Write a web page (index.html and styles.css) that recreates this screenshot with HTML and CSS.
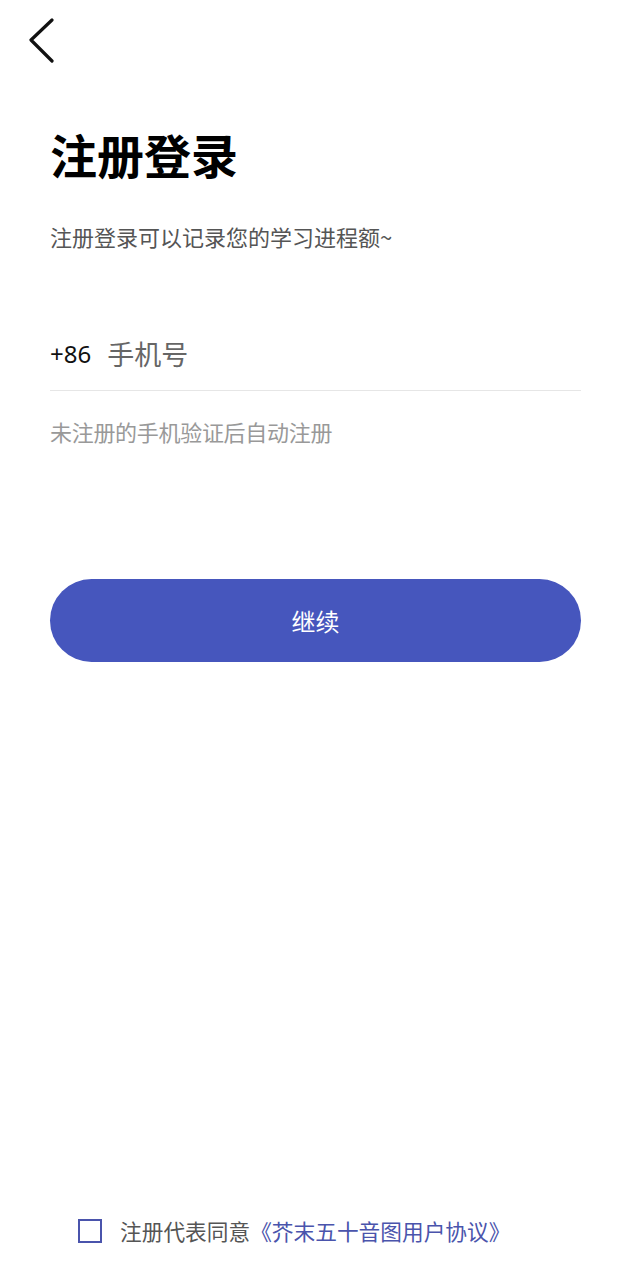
FILE: index.html
```html
<!DOCTYPE html>
<html lang="zh">
<head>
<meta charset="utf-8">
<link rel="stylesheet" href="styles.css">
</head>
<body>
<div class="page">
  <div class="topbar">
    <svg class="back" width="30" height="46" viewBox="0 0 30 46"><path d="M24 2 L3 22 L24 43" fill="none" stroke="#111" stroke-width="3.2" stroke-linecap="round" stroke-linejoin="round"/></svg>
  </div>
  <h1 class="title">注册登录</h1>
  <p class="subtitle">注册登录可以记录您的学习进程额~</p>
  <div class="phone">
    <span class="code">+86</span>
    <span class="placeholder">手机号</span>
  </div>
  <p class="hint">未注册的手机验证后自动注册</p>
  <button class="continue">继续</button>
  <div class="spacer"></div>
  <div class="agree">
    <span class="box"></span>
    <span class="agree-text">注册代表同意<span class="link">《芥末五十音图用户协议》</span></span>
  </div>
</div>
</body>
</html>
```

FILE: styles.css
```css
html, body {
  margin: 0;
  padding: 0;
  background: #fff;
}
body {
  font-family: "Noto Sans CJK SC", "Noto Sans", sans-serif;
  color: #111;
}
.page {
  width: 630px;
  height: 1280px;
  display: flex;
  flex-direction: column;
  box-sizing: border-box;
  padding: 0 49px 0 50px;
}
.topbar {
  height: 64px;
  display: flex;
  align-items: flex-start;
  padding-top: 18px;
  margin-left: -22px;
  box-sizing: border-box;
}
.back {
  display: block;
}
.title {
  margin: 60px 0 0;
  font-size: 47px;
  font-weight: 700;
  line-height: 60px;
  color: #000;
}
.subtitle {
  margin: 37px 0 0;
  font-size: 22px;
  line-height: 30px;
  color: #555;
}
.phone {
  margin-top: 74px;
  height: 56px;
  display: flex;
  align-items: center;
  border-bottom: 1px solid #e6e6e6;
  padding-bottom: 9px;
}
.code {
  font-family: "Noto Sans", sans-serif;
  font-size: 24px;
  color: #111;
}
.placeholder {
  margin-left: 16px;
  font-size: 27px;
  color: #666;
}
.hint {
  margin: 25px 0 0;
  font-size: 22px;
  line-height: 30px;
  color: #999;
  letter-spacing: -0.3px;
}
.continue {
  margin-top: 133px;
  height: 83px;
  border: none;
  border-radius: 42px;
  background: #4656bd;
  color: #fff;
  font-family: "Noto Sans CJK SC", sans-serif;
  font-size: 24px;
  width: 100%;
}
.spacer {
  flex: 1;
}
.agree {
  display: flex;
  align-items: center;
  margin: 0 0 34px 28px;
}
.box {
  width: 20px;
  height: 20px;
  border: 2px solid #4a54ac;
}
.agree-text {
  margin-left: 18px;
  font-size: 21.7px;
  color: #555;
}
.link {
  color: #4a54ac;
}
```
